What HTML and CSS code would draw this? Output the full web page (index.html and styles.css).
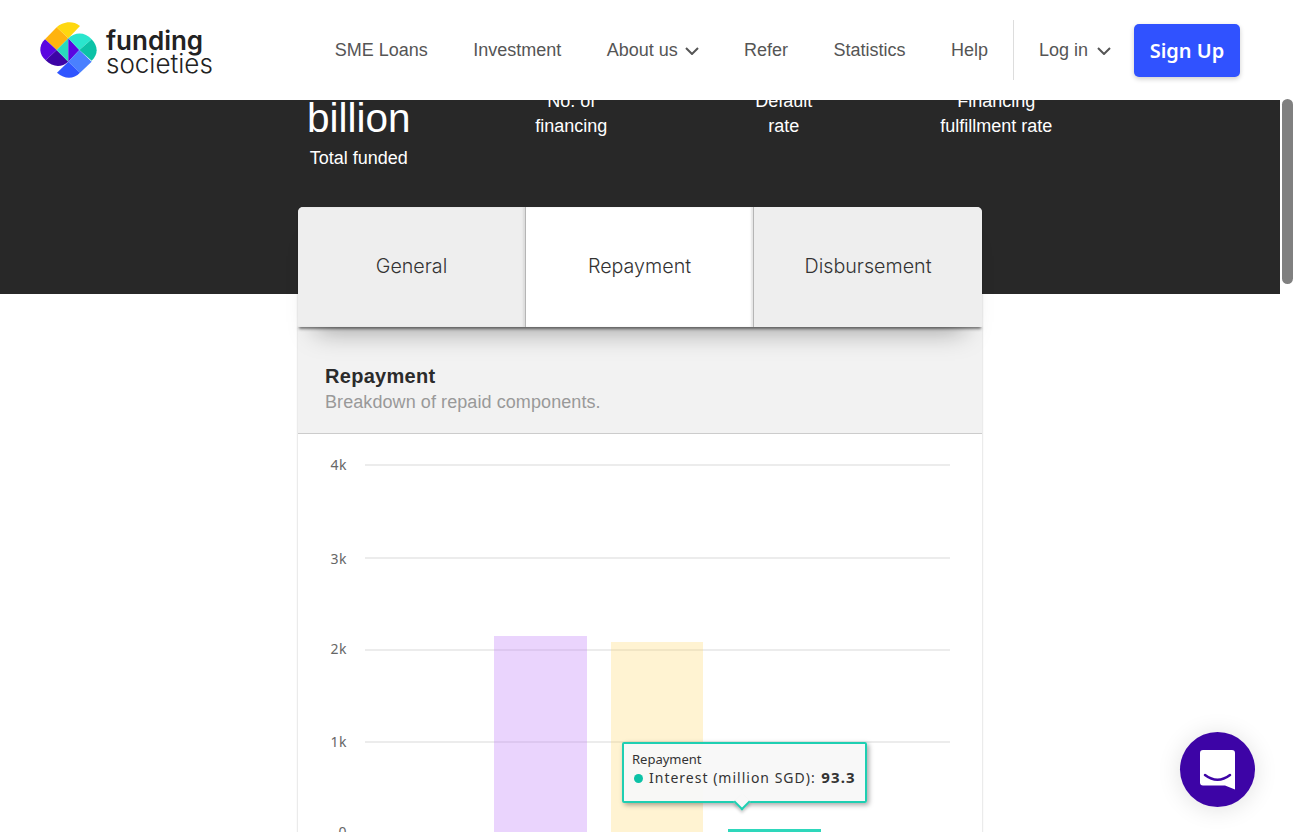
FILE: index.html
```html
<!DOCTYPE html>
<html>
<head>
<meta charset="utf-8">
<title>Funding Societies - Statistics</title>
<link rel="stylesheet" href="styles.css">
</head>
<body>
<header class="topbar">
  <a class="logo">
    <svg class="logo-mark" viewBox="114 60 180 180" width="60" height="60">
      <path fill="#ffd80f" d="M170 82C184 68 215 58 240 78L205 115Z"/>
      <path fill="#ffb30f" d="M135 118L170 82L205 115L170 150Z"/>
      <path fill="#5a06e0" d="M135 118L170 150L137 181C118 165 114 138 135 118Z"/>
      <path fill="#3d04a6" d="M137 181L170 150L205 185C185 203 158 202 137 181Z"/>
      <path fill="#2ad9bd" d="M170 150L205 115V185Z"/>
      <path fill="#5a06e0" d="M205 115L238 150L205 185Z"/>
      <path fill="#2ae5cd" d="M205 115C225 95 255 95 275 118L238 150Z"/>
      <path fill="#0cc2a6" d="M275 118C295 140 295 162 275 182L238 150Z"/>
      <path fill="#4a80ff" d="M238 150L275 185L240 218L205 185Z"/>
      <path fill="#2f55ff" d="M205 185L240 218C220 238 195 238 171 218Z"/>
    </svg>
    <span class="logo-text"><b>funding</b><span>societies</span></span>
  </a>
  <nav class="nav">
    <a>SME Loans</a>
    <a>Investment</a>
    <a class="has-caret">About us <svg class="caret" viewBox="0 0 14 8" width="14" height="8"><path d="M1 1l6 6 6-6"/></svg></a>
    <a>Refer</a>
    <a>Statistics</a>
    <a>Help</a>
  </nav>
  <div class="account">
    <a class="has-caret">Log in <svg class="caret" viewBox="0 0 14 8" width="14" height="8"><path d="M1 1l6 6 6-6"/></svg></a>
    <a class="signup">Sign Up</a>
  </div>
</header>

<section class="hero">
  <div class="stats">
    <div class="stat stat-main">
      <div class="stat-value">billion</div>
      <div class="stat-label">Total funded</div>
    </div>
    <div class="stat"><div class="stat-label">No. of<br>financing</div></div>
    <div class="stat"><div class="stat-label">Default<br>rate</div></div>
    <div class="stat"><div class="stat-label">Financing<br>fulfillment rate</div></div>
  </div>
</section>

<main class="panel">
  <div class="tabs">
    <div class="tab">General</div>
    <div class="tab active">Repayment</div>
    <div class="tab">Disbursement</div>
  </div>
  <div class="card">
    <div class="card-head">
      <h2>Repayment</h2>
      <p>Breakdown of repaid components.</p>
    </div>
    <div class="chart">
      <svg viewBox="298 434 684 420" width="684" height="420">
        <g class="grid">
          <line x1="365" x2="950" y1="465" y2="465"/>
          <line x1="365" x2="950" y1="558" y2="558"/>
          <line x1="365" x2="950" y1="650" y2="650"/>
          <line x1="365" x2="950" y1="742" y2="742"/>
        </g>
        <g class="ticks">
          <text x="347" y="470">4k</text>
          <text x="347" y="564">3k</text>
          <text x="347" y="654">2k</text>
          <text x="347" y="747">1k</text>
          <text x="347" y="837">0</text>
        </g>
        <rect class="bar-purple" x="494" y="636" width="93" height="210"/>
        <rect class="bar-yellow" x="611" y="642" width="92" height="204"/>
        <rect class="bar-teal" x="728" y="829" width="93" height="17"/>
      </svg>
      <div class="tooltip">
        <div class="tooltip-title">Repayment</div>
        <div class="tooltip-row"><i class="dot"></i>Interest (million SGD): <b>93.3</b></div>
      </div>
    </div>
  </div>
</main>

<div class="scroll-thumb"></div>

<div class="chat">
  <svg viewBox="0 0 35 40" width="35" height="40">
    <path fill="#fff" d="M3 0H32a3 3 0 0 1 3 3V39.500L25 35.500H3a3 3 0 0 1-3-3V3a3 3 0 0 1 3-3Z"/>
    <path fill="none" stroke="#3d04a6" stroke-width="2.500" stroke-linecap="round" d="M5 25C13 31 22 31 30 25"/>
  </svg>
</div>
</body>
</html>
```

FILE: styles.css
```css
html, body { margin: 0; padding: 0; height: 832px; overflow: hidden; background: #fff; }
body { font-family: "Liberation Sans", Arial, sans-serif; color: #333; position: relative; }

.topbar { height: 100px; background: #fff; display: flex; align-items: center; padding: 0 55px 0 38px; position: relative; z-index: 5; }
.logo { display: flex; align-items: center; gap: 8px; }
.logo-mark { display: block; }
.logo-text { display: flex; flex-direction: column; font-family: Inter, sans-serif; font-size: 26px; line-height: 23px; color: #222; padding-top: 3px; }
.logo-text b { font-weight: 600; }
.logo-text span { font-weight: 300; }

.nav { display: flex; align-items: center; gap: 45.400px; margin-left: auto; font-size: 18px; color: #555; padding-right: 25px; height: 60px; border-right: 1px solid #ddd; }
.has-caret { display: inline-flex; align-items: center; gap: 7px; }
.caret { fill: none; stroke: #555; stroke-width: 2; margin-top: 2px; }
.account { display: flex; align-items: center; padding-left: 25px; font-size: 18px; color: #555; gap: 23px; }
.account .has-caret { gap: 9px; }
.signup { width: 106px; height: 53px; line-height: 54px; margin-top: 1px; text-align: center; background: #3052ff; color: #fff; border-radius: 5px; font-family: "Noto Sans", sans-serif; font-weight: 600; font-size: 20px; box-shadow: 0 2px 5px rgba(0,0,0,.2); }

.hero { height: 194px; width: 1280px; background: #282828; overflow: hidden; color: #fff; }
.stats { display: grid; grid-template-columns: repeat(4, 212.500px); margin: -14px 0 0 252.500px; text-align: center; }
.stat { padding-top: 3px; }
.stat-value { font-size: 40.500px; line-height: 54px; margin-top: 2px; }
.stat-main .stat-label { margin-top: 1px; }
.stat-label { font-size: 18px; line-height: 25px; }

.panel { width: 684px; margin: -87px 0 0 298px; position: relative; }
.tabs { display: grid; grid-template-columns: 227px 227px 228px; gap: 1px; position: relative; z-index: 2; height: 120px; background: #b5b5b5; border-radius: 5px 5px 0 0; box-shadow: 0 3px 3px -1px rgba(0,0,0,.5), 0 22px 25px -18px rgba(0,0,0,.35); }
.tab { background: #eee; display: flex; align-items: center; justify-content: center; padding-bottom: 2px; font-family: Inter, sans-serif; font-weight: 300; font-size: 19.700px; color: #333; }
.tab:first-child { border-top-left-radius: 5px; box-shadow: inset -2px 0 2px rgba(0,0,0,.08); }
.tab:last-child { border-top-right-radius: 5px; }
.tab.active { background: #fff; box-shadow: inset -2px 0 2px rgba(0,0,0,.1); }

.card { background: #fff; box-shadow: 0 0 2px rgba(0,0,0,.25); }
.card-head { height: 107px; box-sizing: border-box; padding: 37px 27px 0; background: #f2f2f2; border-bottom: 1px solid #ccc; }
.card-head h2 { margin: 0; font-size: 20px; line-height: 24px; letter-spacing: .3px; color: #2b2b2b; }
.card-head p { margin: 0; font-size: 18px; line-height: 28px; letter-spacing: .08px; color: #999; }

.chart { position: relative; height: 420px; }
.chart svg { display: block; }
.grid line { stroke: #e6e6e6; stroke-width: 1.500; }
.ticks text { font-family: "Noto Sans", sans-serif; font-size: 14px; fill: #666; text-anchor: end; letter-spacing: .5px; }
.bar-purple { fill: #c07bfa; fill-opacity: .33; }
.bar-yellow { fill: #ffd257; fill-opacity: .27; }
.bar-teal { fill: #2ed7bb; }

.tooltip { position: absolute; left: 324px; top: 308px; width: 245px; height: 61px; box-sizing: border-box; padding: 6px 8px; background: rgba(248,248,248,.95); border: 2px solid #1fcfb2; border-radius: 2px; box-shadow: 2px 2px 5px rgba(0,0,0,.35); font-family: "Noto Sans", sans-serif; color: #333; }
.tooltip::after { content: ""; position: absolute; left: 112px; bottom: -7px; width: 10px; height: 10px; background: #f8f8f8; border: solid #1fcfb2; border-width: 0 2px 2px 0; transform: rotate(45deg); box-shadow: 2px 2px 3px rgba(0,0,0,.2); }
.tooltip-title { font-size: 13px; line-height: 18px; }
.tooltip-row { font-size: 14px; line-height: 19px; letter-spacing: 1px; white-space: nowrap; }
.tooltip-row b { font-size: 15px; letter-spacing: 1.100px; margin-left: 1px; }
.dot { display: inline-block; width: 9px; height: 9px; border-radius: 50%; background: #0cc2a6; margin: 0 6px 0 2px; }

.scroll-thumb { position: absolute; left: 1282px; top: 99px; width: 11px; height: 185px; background: #808080; border-radius: 6px; z-index: 6; }

.chat { position: absolute; left: 1180px; top: 732px; width: 75px; height: 75px; border-radius: 50%; background: #3d04a6; display: flex; align-items: center; justify-content: center; box-shadow: 0 2px 25px rgba(0,0,0,.12); z-index: 7; }
```
